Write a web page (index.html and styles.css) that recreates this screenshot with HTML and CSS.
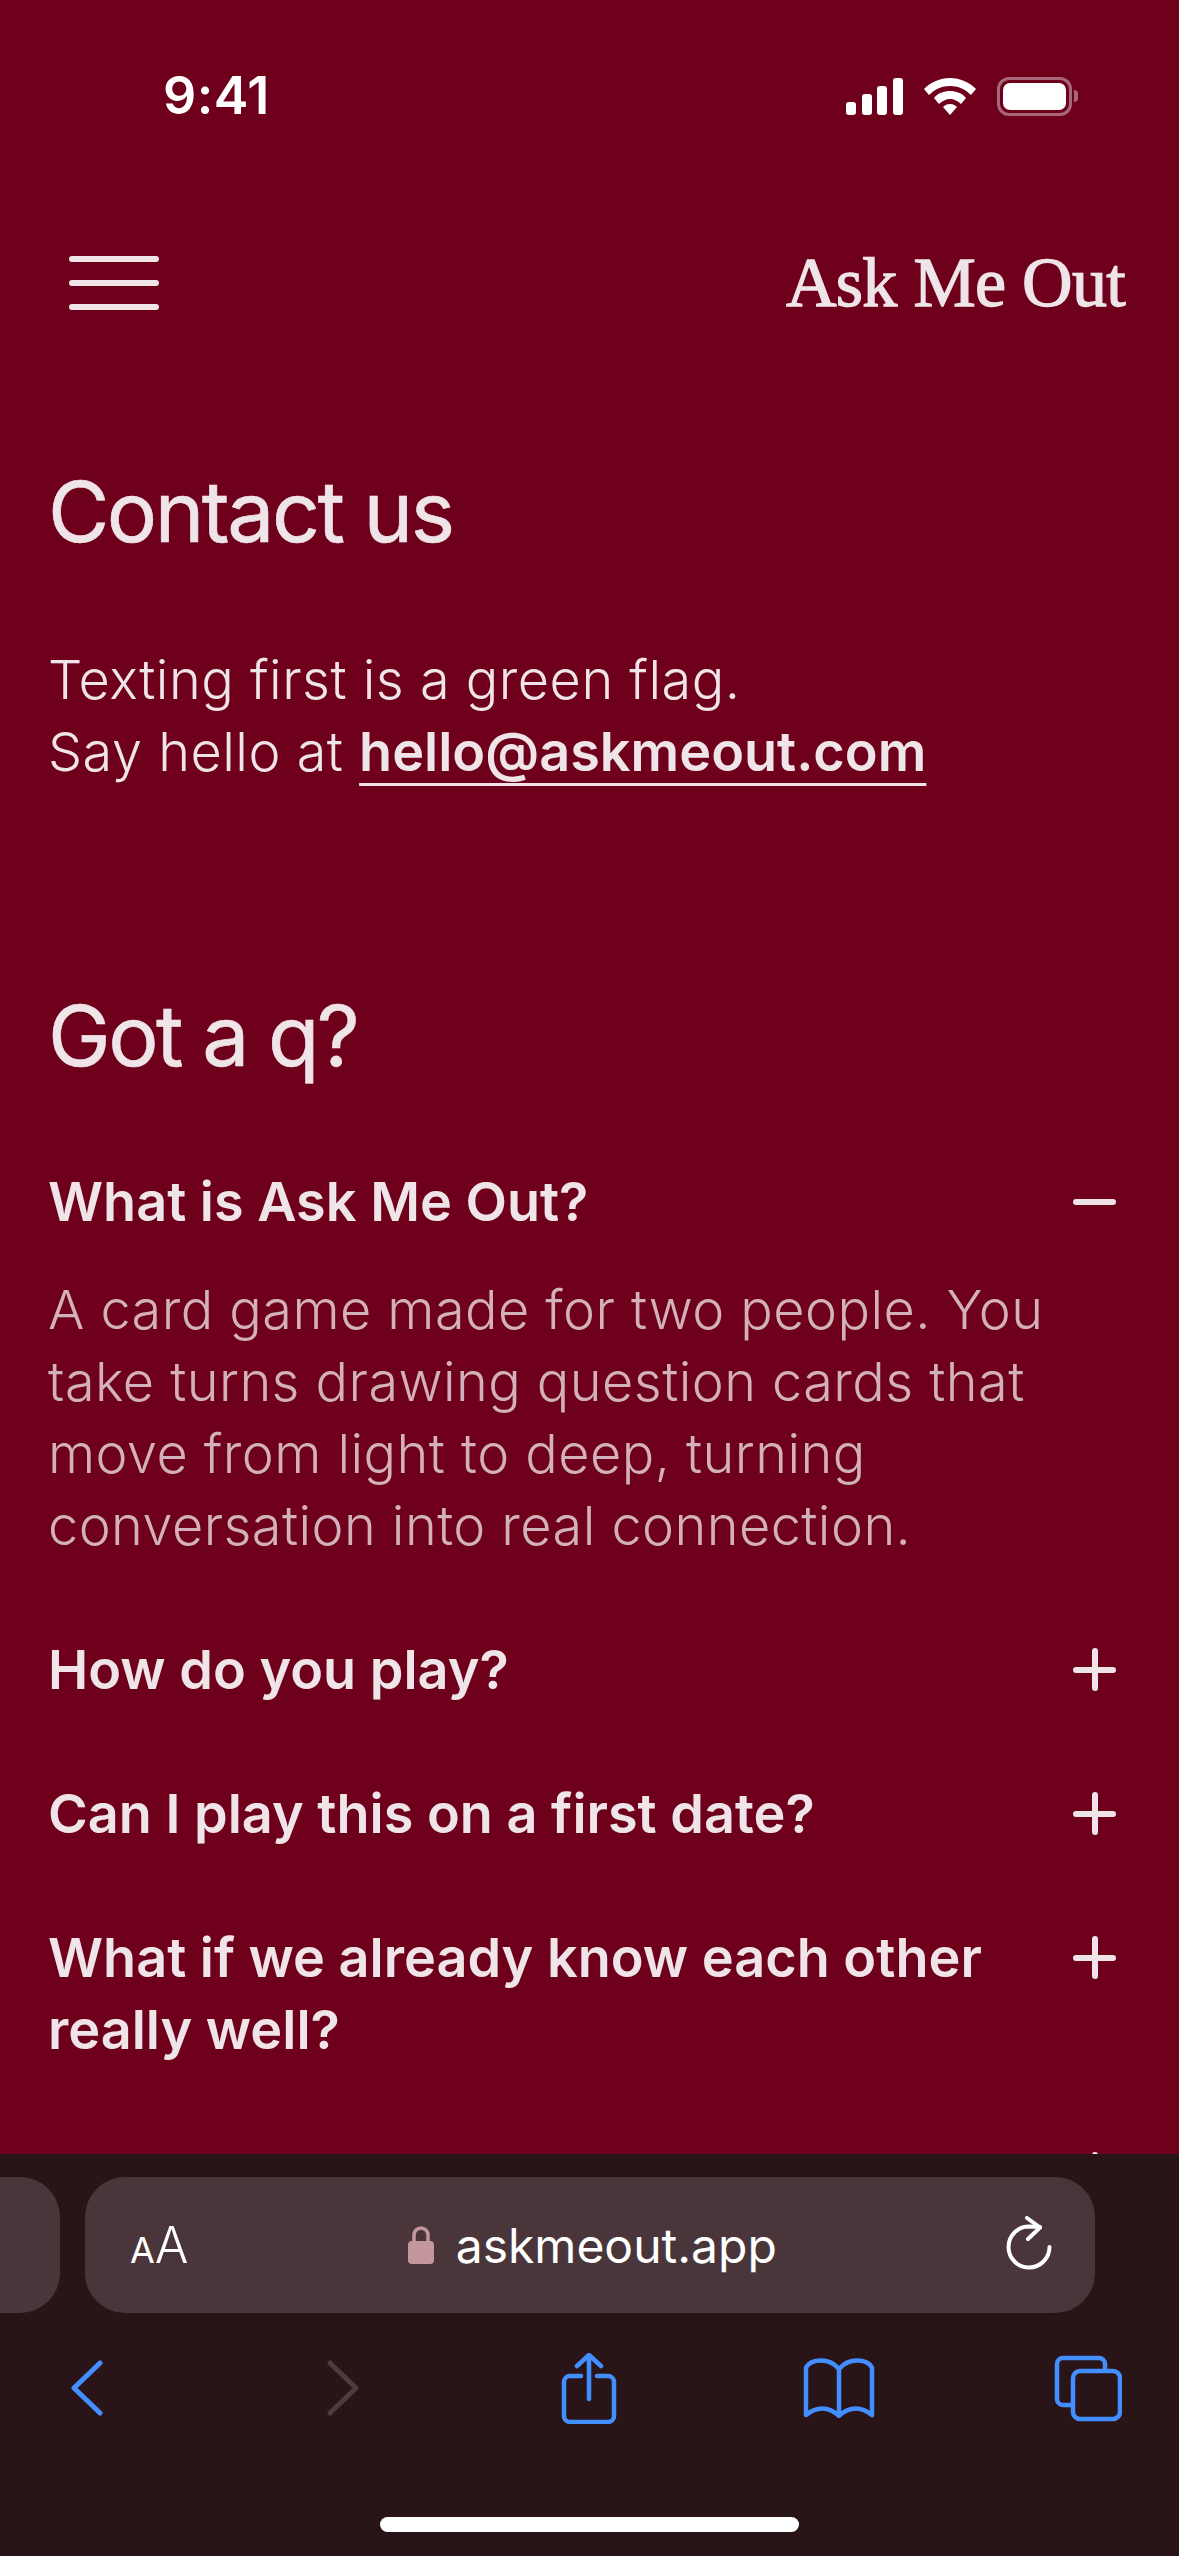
FILE: index.html
```html
<!DOCTYPE html>
<html>
<head>
	<meta charset="utf8">
	<meta name="viewport" content="width=device-width">
	<title>Ask Me Out</title>
	<link rel="stylesheet" href="styles.css">
</head>
<body>
	<div class="statusbar">
		<span class="clock">9:41</span>
		<div class="status-icons">
			<svg width="57" height="37" viewBox="0 0 57 37" fill="#fff">
				<rect x="0" y="24" width="10" height="13" rx="3"/>
				<rect x="16" y="16" width="10" height="21" rx="3"/>
				<rect x="31" y="8" width="10" height="29" rx="3"/>
				<rect x="47" y="0" width="10" height="37" rx="3"/>
			</svg>
			<svg width="52" height="37" viewBox="0 0 52 37" fill="#fff">
				<path d="M26 0C16 0 7 4 0 11l5 6C11 11 18 8 26 8s15 3 21 9l5-6C45 4 36 0 26 0z"/>
				<path d="M26 13c-6 0-12 2-16 7l5 6c3-3 7-5 11-5s8 2 11 5l5-6c-4-5-10-7-16-7z"/>
				<path d="M26 26c-3 0-5 1-7 3l7 8 7-8c-2-2-4-3-7-3z"/>
			</svg>
			<div class="battery"><div class="battery-fill"></div></div>
			<div class="battery-cap"></div>
		</div>
	</div>

	<header class="topnav">
		<button class="burger"><span></span><span></span><span></span></button>
		<a class="logo">Ask Me Out</a>
	</header>

	<main class="content">
		<section class="contact">
			<h1>Contact us</h1>
			<p>Texting first is a green flag.<br>Say hello at <a class="mail">hello@askmeout.com</a></p>
		</section>

		<section class="faq">
			<h1>Got a q?</h1>
			<div class="q open">
				<div class="q-head"><span>What is Ask Me Out?</span><i class="sign minus"></i></div>
				<p>A card game made for two people. You take turns drawing question cards that move from light to deep, turning conversation into real connection.</p>
			</div>
			<div class="q">
				<div class="q-head"><span>How do you play?</span><i class="sign"></i></div>
			</div>
			<div class="q">
				<div class="q-head"><span>Can I play this on a first date?</span><i class="sign"></i></div>
			</div>
			<div class="q">
				<div class="q-head"><span>What if we already know each other really well?</span><i class="sign"></i></div>
			</div>
			<div class="q">
				<div class="q-head"><span>How long does a game take?</span><i class="sign"></i></div>
			</div>
		</section>
	</main>

	<div class="safari">
		<div class="tabs">
			<div class="prev-tab"></div>
			<div class="urlbar">
				<span class="aa"><small>A</small>A</span>
				<div class="url">
					<svg width="26" height="38" viewBox="0 0 26 38">
						<path d="M6 18V9a7 7 0 0 1 14 0v9" fill="none" stroke="#c4979f" stroke-width="3.5"/>
						<rect x="0" y="15" width="26" height="23" rx="4" fill="#c4979f"/>
					</svg>
					<span>askmeout.app</span>
				</div>
				<svg class="reload" width="46" height="54" viewBox="0 0 46 54" fill="none" stroke="#fff" stroke-width="4" stroke-linecap="round" stroke-linejoin="round">
					<path d="M43.5 31a20.5 20.5 0 1 1-20.5-20.5l11 .5"/>
					<path d="M21 2l13 9.5L22 23"/>
				</svg>
			</div>
		</div>
		<nav class="toolbar">
			<svg class="nav-back" width="34" height="56" viewBox="0 0 34 56" fill="none" stroke="#448fff" stroke-width="5" stroke-linecap="round" stroke-linejoin="round"><path d="M30 3L4 28l26 25"/></svg>
			<svg class="nav-fwd" width="34" height="56" viewBox="0 0 34 56" fill="none" stroke="#4a3c40" stroke-width="5" stroke-linecap="round" stroke-linejoin="round"><path d="M4 3l26 25L4 53"/></svg>
			<svg class="nav-share" width="56" height="72" viewBox="0 0 56 72" fill="none" stroke="#448fff" stroke-width="4.5" stroke-linecap="round" stroke-linejoin="round">
				<path d="M20 24H9a6 6 0 0 0-6 6v34a6 6 0 0 0 6 6h38a6 6 0 0 0 6-6V30a6 6 0 0 0-6-6H36"/>
				<path d="M28 47V3M16 14L28 3l12 11"/>
			</svg>
			<svg class="nav-book" width="72" height="60" viewBox="0 0 72 60" fill="none" stroke="#448fff" stroke-width="4.5" stroke-linecap="round" stroke-linejoin="round">
				<path d="M36 11C31 5 24 2.500 18 2.500 10 2.500 5 6 3 9.500V57C8 53 13 50.500 19 50.500 26 50.500 32 54 36 58 40 54 46 50.500 53 50.500 59 50.500 64 53 69 57V9.500C67 6 62 2.500 54 2.500 48 2.500 41 5 36 11ZM36 11V57"/>
			</svg>
			<svg class="nav-tabs" width="68" height="68" viewBox="0 0 68 68" fill="none" stroke="#448fff" stroke-width="4.500" stroke-linejoin="round">
				<path d="M51 16V10a6 6 0 0 0-6-6H9a6 6 0 0 0-6 6v35a6 6 0 0 0 6 6h9"/>
				<rect x="19" y="17" width="47" height="48" rx="7"/>
			</svg>
		</nav>
		<div class="homebar"></div>
	</div>
</body>
</html>
```

FILE: styles.css
```css
html, body {
	margin: 0;
	padding: 0;
}
body {
	position: relative;
	width: 1179px;
	height: 2556px;
	overflow: hidden;
	background: #6e001c;
	color: #efe5e8;
	font-family: Inter, "Liberation Sans", sans-serif;
}

/* Phone status bar */
.statusbar {
	display: flex;
	justify-content: space-between;
	align-items: center;
	height: 60px;
	padding: 65px 101px 0 163px;
}
.clock {
	color: #fff;
	font-size: 52px;
	font-weight: 600;
	letter-spacing: 0.5px;
}
.status-icons {
	display: flex;
	align-items: center;
	gap: 21px;
	margin-top: 2px;
}
.battery {
	box-sizing: border-box;
	width: 75px;
	height: 39px;
	padding: 3px;
	border: 3px solid #a8667a;
	border-radius: 12px;
}
.battery-fill {
	height: 100%;
	background: #fff;
	border-radius: 7px;
}
.battery-cap {
	width: 4px;
	height: 12px;
	margin-left: -19px;
	background: #a8667a;
	border-radius: 0 4px 4px 0;
}

/* Site header */
.topnav {
	display: flex;
	justify-content: space-between;
	align-items: center;
	padding: 122px 54px 0 69px;
}
.burger {
	display: flex;
	flex-direction: column;
	gap: 18px;
	width: 90px;
	padding: 0;
	border: 0;
	background: none;
}
.burger span {
	height: 6px;
	background: #efe5e8;
	border-radius: 3px;
}
.logo {
	font-family: "Liberation Serif", serif;
	font-size: 70px;
	line-height: 72px;
	letter-spacing: -0.7px;
	-webkit-text-stroke: 1.3px #efe5e8;
}

.content {
	padding: 0 48px;
}
h1 {
	margin: 0;
	font-size: 84px;
	font-weight: 400;
	line-height: 96px;
	letter-spacing: -2.5px;
	-webkit-text-stroke: 0.6px #efe5e8;
}
.contact {
	padding-top: 145px;
}
.contact p {
	margin: 84px 0 0;
	font-size: 54px;
	font-weight: 350;
	line-height: 72px;
	letter-spacing: 0.5px;
}
.mail {
	font-weight: 600;
	letter-spacing: 0;
	text-decoration: underline;
	text-decoration-thickness: 3px;
	text-underline-offset: 12px;
}
.faq {
	padding-top: 200px;
}

/* Accordion */
.q {
	padding-bottom: 72px;
}
.faq h1 + .q {
	margin-top: 82px;
}
.q-head {
	display: flex;
	justify-content: space-between;
	align-items: flex-start;
	gap: 60px;
	font-size: 54px;
	font-weight: 600;
	line-height: 72px;
}
.q p {
	margin: 36px 0 0;
	color: #d3b1ba;
	font-size: 54px;
	font-weight: 350;
	line-height: 72px;
	letter-spacing: 0.45px;
}
.sign {
	position: relative;
	flex: 0 0 44px;
	width: 44px;
	height: 72px;
	margin-right: 14px;
}
.sign::before, .sign::after {
	content: "";
	position: absolute;
	background: #efe5e8;
	border-radius: 3px;
}
.sign::before {
	left: 0;
	top: 33px;
	width: 43px;
	height: 6px;
}
.sign::after {
	left: 19px;
	top: 14px;
	width: 6px;
	height: 43px;
}
.sign.minus::after {
	display: none;
}

/* Safari chrome, sits on top of the page */
.safari {
	position: absolute;
	left: 0;
	right: 0;
	bottom: 0;
	height: 402px;
	background: #291418;
}
.tabs {
	display: flex;
	gap: 25px;
	padding-top: 23px;
}
.prev-tab {
	flex: 0 0 60px;
	height: 136px;
	background: #4a363a;
	border-radius: 0 40px 40px 0;
}
.urlbar {
	display: flex;
	align-items: center;
	justify-content: space-between;
	box-sizing: border-box;
	width: 1010px;
	height: 136px;
	padding: 0 43px 0 45px;
	background: #4a363a;
	border-radius: 40px;
	color: #fff;
}
.aa {
	font-size: 50px;
	font-weight: 300;
}
.aa small {
	font-size: 36px;
	font-weight: 400;
}
.url {
	display: flex;
	align-items: center;
	gap: 22px;
	margin-right: 10px;
	font-size: 48px;
}
.reload {
	margin-bottom: 4px;
}
.toolbar {
	display: flex;
	align-items: center;
	height: 72px;
	padding: 39px 0 0 70px;
}
.nav-fwd {
	margin-left: 222px;
}
.nav-share {
	margin-left: 201px;
}
.nav-book {
	margin-left: 186px;
}
.nav-tabs {
	margin-left: 179px;
}
.homebar {
	position: absolute;
	left: 380px;
	bottom: 24px;
	width: 419px;
	height: 15px;
	background: #fff;
	border-radius: 8px;
}
```
